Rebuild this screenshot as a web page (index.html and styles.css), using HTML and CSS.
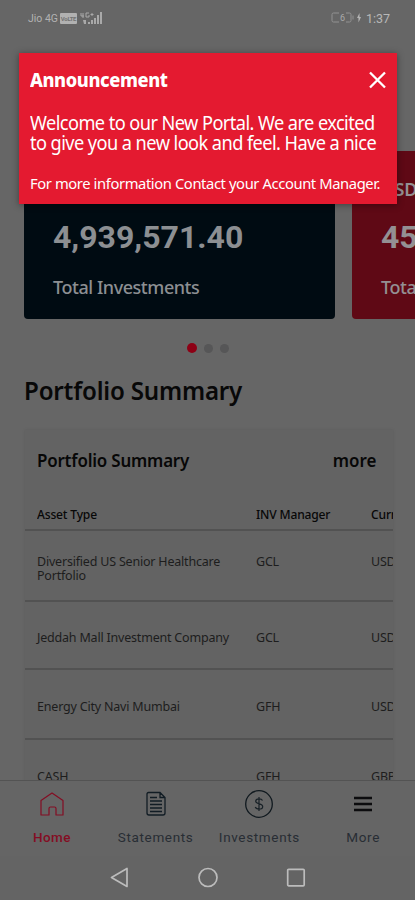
FILE: index.html
```html
<!DOCTYPE html>
<html lang="en">
<head>
<meta charset="utf-8">
<title>Portfolio</title>
<link rel="stylesheet" href="styles.css">
</head>
<body>
<div class="phone">
  <header class="status">
    <div class="status-left">
      <span>Jio 4G</span><span class="volte">VoLTE</span>
      <svg width="23" height="13" viewBox="0 0 23 13"><path d="M1 1v3h3M3 1v5M6 1h3M6 1v4h3V3M12 1v3M10.500 2.500h3" fill="none" stroke="#a9a9a9"/><path d="M3 8h3v4H4zM8 10h2v2H8zM11 8h2v4h-2zM14 6h2v6h-2zM17 3h2v9h-2zM20 0h2v12h-2z" fill="#a9a9a9"/></svg>
    </div>
    <div class="status-right">
      <svg width="31" height="12" viewBox="0 0 31 12"><path d="M8 1H2.500Q1 1 1 2.500v6Q1 10 2.500 10H8M15 1h3.500Q20 1 20 2.500v6q0 1.500-1.500 1.500H15M22 3.500v4" fill="none" stroke="#929292"/><text class="charge" x="9" y="9">6</text><path d="M28.500 1L26 6h1.500v4.500L30 5h-1.500z" fill="#b5b5b5"/></svg>
      <span>1:37</span>
    </div>
  </header>

  <main class="content">
    <section class="carousel">
      <article class="card navy"><p class="currency">USD</p><p class="amount">4,939,571.40</p><p class="caption">Total Investments</p></article>
      <article class="card red"><p class="currency">USD</p><p class="amount">45,000.00</p><p class="caption">Total Income</p></article>
    </section>
    <div class="dots"><i class="on"></i><i></i><i></i></div>
    <h1>Portfolio Summary</h1>
    <section class="panel">
      <div class="panel-head"><h2>Portfolio Summary</h2><a>more</a></div>
      <div class="row head"><span>Asset Type</span><span>INV Manager</span><span>Currency</span></div>
      <div class="row first"><span>Diversified US Senior Healthcare<br>Portfolio</span><span>GCL</span><span>USD</span></div>
      <div class="row second"><span>Jeddah Mall Investment Company</span><span>GCL</span><span>USD</span></div>
      <div class="row third"><span>Energy City Navi Mumbai</span><span>GFH</span><span>USD</span></div>
      <div class="row fourth"><span>CASH</span><span>GFH</span><span>GBP</span></div>
    </section>
  </main>

  <nav class="tabs">
    <a class="active"><svg width="30" height="30" viewBox="0 0 30 30"><path d="M4 11.500L15 4l11 7.500V26h-7v-6.500a1.500 1.500 0 0 0-1.500-1.500h-4a1.500 1.500 0 0 0-1.500 1.500V26H4z" fill="none" stroke="currentColor" stroke-width="1.200" stroke-linejoin="round"/></svg><span>Home</span></a>
    <a><svg width="30" height="30" viewBox="0 0 30 30"><path d="M7.500 3.500H19L24 8.500V24q0 2-2 2H8q-2 0-2-2V5q0-1.500 1.500-1.500zM19 3.500v5h5M9 8.500h7M9 12h12M9 15.500h12M9 19h12M9 22.500h12" fill="none" stroke="#111c24" stroke-width="1.300"/></svg><span>Statements</span></a>
    <a><svg width="30" height="30" viewBox="0 0 30 30"><circle cx="15" cy="15" r="13.300" fill="none" stroke="#10191f" stroke-width="1.300"/><path d="M18.500 11.500q-.7-1.600-3.500-1.600-3.300 0-3.300 2.400c0 3.200 7 1.600 7 5.100q0 2.600-3.500 2.600-3.300 0-3.900-2M15 8v14" fill="none" stroke="#182127" stroke-width="1.200"/></svg><span>Investments</span></a>
    <a><svg width="30" height="30" viewBox="0 0 30 30"><path d="M6 9h18M6 15h18M6 21h18" stroke="#0c0c0e" stroke-width="2.300"/></svg><span>More</span></a>
  </nav>
  <footer class="system">
    <svg width="20" height="22" viewBox="0 0 20 22"><path d="M18 1.500v18L2.500 10.500z" fill="none" stroke="#bcbcbc" stroke-width="1.700" stroke-linejoin="round"/></svg>
    <svg width="20" height="22" viewBox="0 0 20 22"><circle cx="10" cy="10.500" r="9" fill="none" stroke="#bcbcbc" stroke-width="1.700"/></svg>
    <svg width="20" height="22" viewBox="0 0 20 22"><rect x="1.700" y="2.300" width="16.500" height="16.500" rx="1" fill="none" stroke="#bcbcbc" stroke-width="1.700"/></svg>
  </footer>

  <aside class="announcement">
    <div class="notice-head"><strong>Announcement</strong><svg width="18" height="18" viewBox="0 0 18 18"><path d="M2 1.500l15 15M17 1.500l-15 15" stroke="#fff" stroke-width="2.300"/></svg></div>
    <p class="welcome">Welcome to our New Portal. We are excited<br>to give you a new look and feel. Have a nice</p>
    <p class="contact">For more information Contact your Account Manager.</p>
  </aside>
</div>
</body>
</html>
```
FILE: styles.css
```css
* { box-sizing: border-box; }
body, p, h1, h2 { margin: 0; }
body { background: #666; font-family: "Noto Sans", "Open Sans", sans-serif; overflow: hidden; }
.phone { position: relative; width: 415px; height: 900px; display: flex; flex-direction: column; overflow: hidden; background: #666; }
svg { display: block; flex: none; }

.status { height: 36px; flex: none; padding: 0 25px 0 28px; display: flex; justify-content: space-between; align-items: center; color: #b2b2b2; font: 10.5px Roboto, sans-serif; }
.status-left, .status-right { display: flex; align-items: center; }
.volte { width: 17px; height: 11px; margin: 0 3px 0 2px; background: #b1b1b1; color: #727272; border-radius: 1px; font-size: 6px; font-weight: 700; line-height: 11px; text-align: center; letter-spacing: -0.3px; }
.status-right { gap: 4px; font-size: 12.5px; color: #b8b8b8; }
.charge { font: 9px Roboto, sans-serif; fill: #aaa; }

.content { flex: 1; min-height: 0; padding-top: 115px; overflow: hidden; }
.carousel { display: flex; gap: 17px; padding-left: 24px; overflow: hidden; }
.card { width: 311px; height: 168px; flex: none; padding: 25px 29px; border-radius: 4px; color: #8c8f92; }
.navy { background: #000b12; }
.red { background: #5f0915; color: #949093; }
.currency { font-size: 18px; font-weight: 600; line-height: 26px; }
.amount { margin-top: 16px; font: 700 32px/38px Roboto, sans-serif; }
.caption { margin-top: 18px; font-size: 18px; font-weight: 500; line-height: 26px; letter-spacing: -0.45px; white-space: nowrap; }
.dots { height: 58px; display: flex; justify-content: center; align-items: center; gap: 7px; }
.dots i { width: 9px; height: 9px; border-radius: 50%; background: #565657; }
.dots .on { background: #8d0015; width: 10px; height: 10px; }
h1 { height: 53px; padding-left: 24px; font-size: 25px; font-weight: 600; line-height: 27px; letter-spacing: -0.2px; color: #080808; transform: scaleX(.965); transform-origin: 24px 0; }

.panel { width: 368px; margin-left: 25px; overflow: hidden; background: #636363; box-shadow: 0 0 2px #5b5b5b; }
.panel-head { height: 66px; padding: 17px 17px 0 12px; display: flex; justify-content: space-between; font-size: 18px; font-weight: 600; line-height: 26px; color: #070707; }
h2 { font: inherit; letter-spacing: -0.2px; transform: scaleX(.94); transform-origin: left; }
.panel-head a { transform: scaleX(.94); transform-origin: right; }
.row { display: grid; grid-template-columns: 219px 115px 100px; padding-left: 12px; border-bottom: 2px solid #525252; color: #1d1d1d; font-size: 12.5px; line-height: 14px; letter-spacing: -0.2px; white-space: nowrap; }
.head { height: 35px; padding-top: 11px; color: #080808; font-size: 13px; font-weight: 500; }
.head span { transform: scaleX(.93); transform-origin: left; }
.first { height: 71px; padding-top: 24px; }
.second { height: 68px; padding-top: 29px; }
.third { height: 70px; padding-top: 30px; }
.fourth { height: 70px; padding-top: 30px; }

.tabs { height: 76px; flex: none; display: grid; grid-template-columns: repeat(4, 1fr); border-top: 1px solid #535353; background: #656565; color: #282d34; font: 13.5px/18px Roboto, sans-serif; letter-spacing: 0.65px; }
.tabs a { display: flex; flex-direction: column; align-items: center; padding-top: 8px; gap: 9px; }
.tabs .active { color: #840d23; }
.tabs .active span { font-weight: 500; letter-spacing: 0.4px; }
.system { height: 44px; flex: none; padding: 0 109px; display: flex; justify-content: space-between; align-items: center; background: #646464; }

.announcement { position: absolute; left: 19px; top: 53px; width: 378px; height: 151px; padding: 15px 11px 0 11px; background: #e41a30; color: #fff; box-shadow: 0 1px 7px rgba(0, 0, 0, .4); white-space: nowrap; }
.notice-head { display: flex; justify-content: space-between; align-items: center; height: 24px; font-size: 19px; }
.notice-head strong { font-weight: 800; letter-spacing: -0.4px; transform: scaleX(.958); transform-origin: left; }
.welcome { margin-top: 21px; font-size: 19px; line-height: 20px; letter-spacing: -0.6px; transform: scaleX(.958); transform-origin: left; }
.contact { margin-top: 19px; font-size: 15px; line-height: 22px; letter-spacing: -0.4px; transform: scaleX(.983); transform-origin: left; }
```
